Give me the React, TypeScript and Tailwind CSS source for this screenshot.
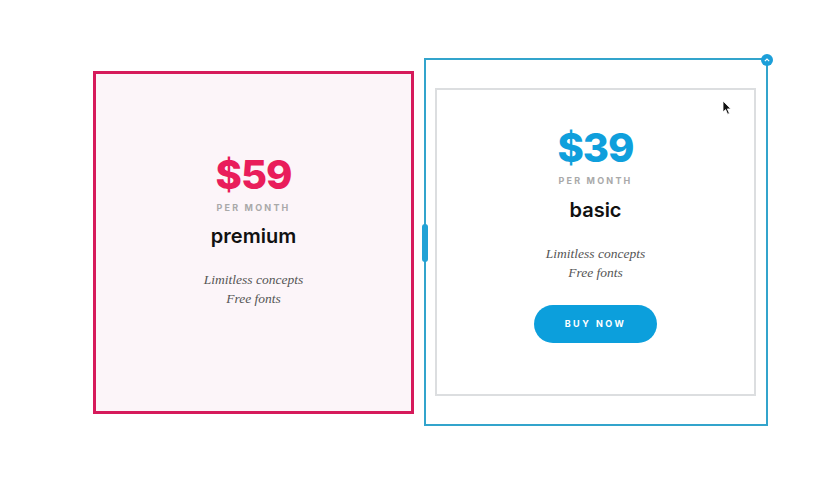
import React from "react";

function Cursor() {
  return (
    <svg width="10" height="16" viewBox="0 0 10 16" className="absolute left-[722px] top-[100px]">
      <path d="M1 1 L1 12 L3.6 9.6 L5.6 14.2 L7.4 13.4 L5.4 8.9 L8.8 8.9 Z" fill="#111" stroke="#fff" strokeWidth="0.8" />
    </svg>
  );
}

function Content({ price, color, name }: { price: string; color: string; name: string }) {
  return (
    <>
      <div className={`text-[40px] leading-[48px] font-extrabold tracking-[-1px] font-['Inter',sans-serif] ${color}`}>{price}</div>
      <div className="mt-[2px] text-[9px] font-bold tracking-[2.2px] text-[#a9a9a9] font-['Inter',sans-serif]">PER MONTH</div>
      <div className="mt-[9px] text-[20px] leading-[26px] font-semibold text-[#111] font-['Inter',sans-serif]">{name}</div>
      <div className="mt-[21px] text-[13.5px] leading-[19px] italic text-[#555] text-center font-['Liberation_Serif',serif]">
        <div>Limitless concepts</div>
        <div>Free fonts</div>
      </div>
    </>
  );
}

export default function App() {
  return (
    <div className="relative w-[840px] h-[488px] bg-white overflow-hidden">
      <div className="flex items-center h-[484px] pl-[93px] gap-[10px]">
        <div className="w-[321px] h-[343px] border-[3px] border-[#d61a5b] bg-[#fcf5f9] flex flex-col items-center pt-[77px]">
          <Content price="$59" color="text-[#e91d5b]" name="premium" />
        </div>
        <div className="relative w-[344px] h-[368px] border-2 border-[#33a4cc] pl-[9px] pr-[10px] pt-[28px]">
          <div className="absolute left-[-4px] top-[164px] w-[6px] h-[38px] rounded-full bg-[#22a2d6]" />
          <div className="absolute right-[-7px] top-[-6px] w-[12px] h-[12px] rounded-full bg-[#1c9fd9] flex items-center justify-center">
            <svg width="6" height="4" viewBox="0 0 6 4"><path d="M0.8 3.2 L3 1 L5.2 3.2" fill="none" stroke="#fff" strokeWidth="1.1" /></svg>
          </div>
          <div className="w-[321px] h-[308px] border-2 border-[#dcdee0] bg-white flex flex-col items-center pt-[34px]">
            <Content price="$39" color="text-[#0f9fdc]" name="basic" />
            <div className="mt-[23px] w-[123px] h-[38px] rounded-full bg-[#0c9fdc] flex items-center justify-center text-white text-[9px] font-bold tracking-[2.5px] font-['Inter',sans-serif]">BUY NOW</div>
          </div>
        </div>
      </div>
      <Cursor />
    </div>
  );
}
